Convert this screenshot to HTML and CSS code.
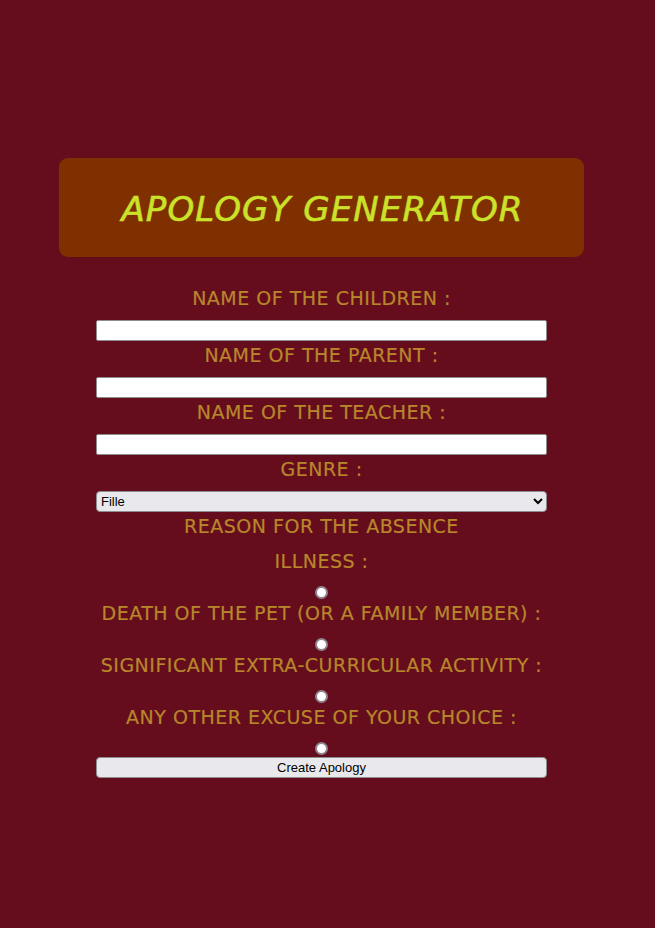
FILE: index.html
```html
<!DOCTYPE html>
<html lang="en">
<head>
<meta charset="utf-8">
<title>Apology Generator</title>
<link rel="stylesheet" href="styles.css">
</head>
<body>
<div class="page">
  <header class="banner">
    <h1 class="title">APOLOGY GENERATOR</h1>
  </header>
  <form class="form">
    <label class="label" for="child">NAME OF THE CHILDREN :</label>
    <input class="field" type="text" id="child">
    <label class="label" for="parent">NAME OF THE PARENT :</label>
    <input class="field" type="text" id="parent">
    <label class="label" for="teacher">NAME OF THE TEACHER :</label>
    <input class="field" type="text" id="teacher">
    <label class="label" for="genre">GENRE :</label>
    <select class="select" id="genre">
      <option>Fille</option>
      <option>Garçon</option>
    </select>
    <div class="label reason">REASON FOR THE ABSENCE</div>
    <label class="label" for="r1">ILLNESS :</label>
    <input class="radio" type="radio" name="reason" id="r1">
    <label class="label" for="r2">DEATH OF THE PET (OR A FAMILY MEMBER) :</label>
    <input class="radio" type="radio" name="reason" id="r2">
    <label class="label" for="r3">SIGNIFICANT EXTRA-CURRICULAR ACTIVITY :</label>
    <input class="radio" type="radio" name="reason" id="r3">
    <label class="label" for="r4">ANY OTHER EXCUSE OF YOUR CHOICE :</label>
    <input class="radio" type="radio" name="reason" id="r4">
    <button class="button" type="button">Create Apology</button>
  </form>
</div>
</body>
</html>
```
FILE: styles.css
```css
html, body {
  margin: 0;
  padding: 0;
  background: #650d1c;
  min-height: 100%;
}
body {
  font-family: "DejaVu Sans", "Liberation Sans", sans-serif;
}
.page {
  width: 643px;
  padding-top: 158px;
}
.banner {
  width: 525px;
  height: 99px;
  margin: 0 auto;
  background: #803000;
  border-radius: 9px;
  display: flex;
  align-items: center;
  justify-content: center;
}
.title {
  margin: 0;
  font-family: "DejaVu Sans", sans-serif;
  font-style: italic;
  font-weight: normal;
  font-size: 34px;
  letter-spacing: 1.1px;
  color: #cbe22a;
  line-height: 1;
  padding-top: 2px;
  padding-left: 2px;
  -webkit-text-stroke: 0.6px #cbe22a;
}
.form {
  width: 451px;
  margin: 27px auto 0;
  display: flex;
  flex-direction: column;
  align-items: stretch;
}
.label {
  display: block;
  text-align: center;
  font-size: 19px;
  letter-spacing: 0.5px;
  line-height: 28px;
  height: 28px;
  color: #b8862b;
  margin-bottom: 8px;
  white-space: nowrap;
  -webkit-text-stroke: 0.2px #b8862b;
}
.reason {
  margin-bottom: 7px;
}
.field {
  box-sizing: border-box;
  height: 21px;
  width: 100%;
  margin: 0;
  border: 1px solid #8d8d8d;
  border-radius: 2px;
  background: #fff;
  padding: 1px 2px;
}
.select {
  box-sizing: border-box;
  height: 21px;
  width: 100%;
  margin: 0;
  font-family: "Liberation Sans", Arial, sans-serif;
  font-size: 13px;
  color: #000;
  background: #e9e9ed;
  border: 1px solid #8d8d8d;
  border-radius: 4px;
}
.radio {
  -webkit-appearance: none;
  appearance: none;
  box-sizing: border-box;
  align-self: center;
  width: 13px;
  height: 13px;
  margin: 3px 0 0;
  border: 2px solid #8f8690;
  border-radius: 50%;
  background: #fff;
}
.button {
  box-sizing: border-box;
  height: 21px;
  width: 100%;
  margin: 2px 0 0;
  font-family: "Liberation Sans", Arial, sans-serif;
  font-size: 13px;
  color: #000;
  background: #e9e9ed;
  border: 1px solid #8d8d8d;
  border-radius: 4px;
  padding: 0;
}
```
